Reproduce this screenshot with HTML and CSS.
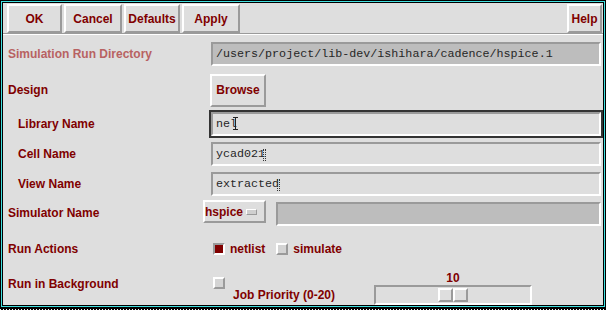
FILE: index.html
```html
<!DOCTYPE html>
<html lang="en">
<head>
    <meta charset="UTF-8">
    <meta name="viewport" content="width=device-width, initial-scale=1.0">
    <title>Simulation Environment Options</title>
    <link rel="stylesheet" href="styles.css">
</head>
<body>
    <div class="window">
        <div class="toolbar">
            <button class="btn btn-ok">OK</button>
            <button class="btn btn-cancel">Cancel</button>
            <button class="btn btn-defaults">Defaults</button>
            <button class="btn btn-apply">Apply</button>
            <button class="btn btn-help">Help</button>
        </div>

        <div class="form">
            <div class="label disabled">Simulation Run Directory</div>
            <div class="ctrl">
                <div class="field readonly">/users/project/lib-dev/ishihara/cadence/hspice.1</div>
            </div>

            <div class="label">Design</div>
            <div class="ctrl">
                <button class="btn btn-browse">Browse</button>
            </div>

            <div class="label sub">Library Name</div>
            <div class="ctrl">
                <div class="field focused">nel<span class="ibeam"></span></div>
            </div>

            <div class="label sub">Cell Name</div>
            <div class="ctrl">
                <div class="field">ycad021<span class="dotcursor"></span></div>
            </div>

            <div class="label sub">View Name</div>
            <div class="ctrl">
                <div class="field">extracted<span class="dotcursor"></span></div>
            </div>

            <div class="label">Simulator Name</div>
            <div class="ctrl ctrl-top">
                <button class="btn cycle">hspice<span class="cycle-mark"></span></button>
                <div class="field readonly sim-field"></div>
            </div>

            <div class="label">Run Actions</div>
            <div class="ctrl">
                <span class="check on"></span>
                <span class="opt">netlist</span>
                <span class="check off"></span>
                <span class="opt">simulate</span>
            </div>

            <div class="label top">Run in Background</div>
            <div class="bg-ctrl">
                <span class="check off bg-check"></span>
                <span class="job-label">Job Priority (0-20)</span>
                <div class="slider-value">10</div>
                <div class="trough">
                    <div class="thumb"><span></span><span></span></div>
                </div>
            </div>
        </div>
    </div>
    <div class="dots"></div>
</body>
</html>
```

FILE: styles.css
```css
* {
    box-sizing: border-box;
}

body {
    margin: 0;
    background: #000;
    font-family: "Liberation Sans", Arial, sans-serif;
    font-size: 12px;
    font-weight: bold;
    color: #800000;
}

.window {
    width: 606px;
    height: 308px;
    border: 1px solid #000;
    padding: 2px;
    background: #dedede;
    box-shadow: inset 0 0 0 1px #40e0e0, inset 0 0 0 2px #000;
    display: flex;
    flex-direction: column;
}

/* top button bar */
.toolbar {
    display: flex;
    gap: 2px;
    padding: 1px 1px 0 4px;
    border-bottom: 1px solid #9a9a9a;
}

.btn {
    height: 29px;
    padding: 0;
    border: 2px solid;
    border-color: #fff #9a9a9a #9a9a9a #fff;
    background: #dedede;
    font: inherit;
    color: #800000;
    cursor: pointer;
}

.btn-ok { width: 55px; }
.btn-cancel { width: 58px; }
.btn-defaults { width: 56px; }
.btn-apply { width: 58px; }
.btn-help { width: 35px; margin-left: auto; }

/* form */
.form {
    flex: 1;
    border-top: 1px solid #fff;
    display: grid;
    grid-template-columns: 208px 1fr;
    grid-template-rows: 37px 36px 31px 29px 31px 27px 45px 34px;
}

.label {
    align-self: center;
    padding-left: 5px;
    line-height: 14px;
    white-space: nowrap;
}

.label.sub {
    padding-left: 15px;
}

.label.top {
    align-self: start;
    padding-top: 6px;
}

.label.disabled {
    color: #b86262;
}

.ctrl {
    display: flex;
    align-items: center;
}

.ctrl-top {
    align-items: flex-start;
}

.field {
    width: 390px;
    height: 24px;
    padding-left: 3px;
    border: 2px solid;
    border-color: #9a9a9a #fff #fff #9a9a9a;
    background: #dedede;
    font-family: "Liberation Mono", "Courier New", monospace;
    font-weight: normal;
    font-size: 11.7px;
    color: #262626;
    display: flex;
    align-items: center;
    white-space: pre;
}

.field.readonly {
    background: #bdbdbd;
}

.field.focused {
    outline: 2px solid #333;
}

.ibeam {
    display: inline-block;
    width: 5px;
    height: 13px;
    margin-left: -4px;
    border-top: 1px solid #222;
    border-bottom: 1px solid #222;
    background: linear-gradient(#222, #222) center / 1px 100% no-repeat;
}

.dotcursor {
    display: inline-block;
    width: 3px;
    height: 12px;
    margin-left: -2px;
    margin-top: 2px;
    border-left: 1px dotted #333;
    border-right: 1px dotted #333;
}

.btn-browse {
    width: 56px;
    height: 33px;
    margin-left: -1px;
}

.cycle {
    width: 63px;
    height: 23px;
    margin: 1px 0 0 -8px;
    display: flex;
    align-items: center;
}

.cycle-mark {
    width: 11px;
    height: 6px;
    margin-left: 3px;
    border: 1px solid;
    border-color: #fff #9a9a9a #9a9a9a #fff;
    background: #cfcfcf;
}

.sim-field {
    width: 325px;
    margin: 3px 0 0 10px;
}

/* toggles */
.check {
    display: inline-block;
    width: 12px;
    height: 12px;
    margin-left: 2px;
    border: 2px solid;
}

.check.on {
    border-color: #9a9a9a #fff #fff #9a9a9a;
    background: #800000;
}

.check.off {
    border-color: #fff #9a9a9a #9a9a9a #fff;
    background: #d4d4d4;
}

.opt {
    margin-left: 5px;
}

.opt + .check {
    margin-left: 11px;
}

/* background row with priority slider */
.bg-ctrl {
    display: grid;
    grid-template-columns: 22px 141px 158px;
    grid-template-rows: 14px 20px;
}

.bg-check {
    grid-row: 1;
    grid-column: 1;
    margin-top: 6px;
}

.job-label {
    grid-row: 2;
    grid-column: 2;
    line-height: 20px;
}

.slider-value {
    grid-row: 1;
    grid-column: 3;
    text-align: center;
    line-height: 14px;
}

.trough {
    grid-row: 2;
    grid-column: 3;
    border: 2px solid;
    border-color: #9a9a9a #fff #fff #9a9a9a;
    display: flex;
    justify-content: center;
    align-items: center;
}

.thumb {
    display: flex;
    height: 14px;
}

.thumb span {
    width: 15px;
    border: 2px solid;
    border-color: #fff #9a9a9a #9a9a9a #fff;
    background: #dedede;
}

.dots {
    height: 2px;
    background:
        linear-gradient(#000 0 1px, transparent 1px),
        repeating-linear-gradient(90deg, #fff 0 1px, #000 1px 3px);
}
```
